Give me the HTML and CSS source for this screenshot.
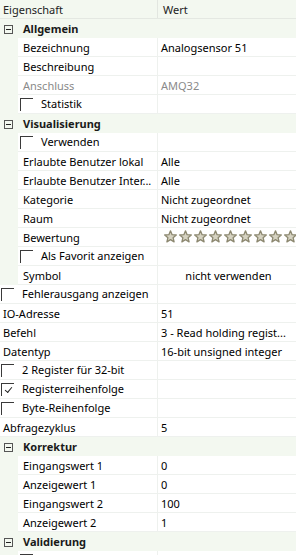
FILE: index.html
```html
<!DOCTYPE html>
<html>
<head>
<meta charset="utf-8">
<link rel="stylesheet" href="styles.css">
</head>
<body>
<div class="grid">
  <div class="hdr"><div class="hk">Eigenschaft</div><div class="hv">Wert</div></div>

  <div class="grp"><span class="tog"></span><span class="gt">Allgemein</span></div>
  <div class="row"><div class="ind"></div><div class="k">Bezeichnung</div><div class="v">Analogsensor 51</div></div>
  <div class="row"><div class="ind"></div><div class="k">Beschreibung</div><div class="v"></div></div>
  <div class="row dis"><div class="ind"></div><div class="k">Anschluss</div><div class="v">AMQ32</div></div>
  <div class="row"><div class="ind"></div><div class="k cb"><span class="box"></span>Statistik</div><div class="v"></div></div>

  <div class="grp"><span class="tog"></span><span class="gt">Visualisierung</span></div>
  <div class="row"><div class="ind"></div><div class="k cb"><span class="box"></span>Verwenden</div><div class="v"></div></div>
  <div class="row"><div class="ind"></div><div class="k">Erlaubte Benutzer lokal</div><div class="v">Alle</div></div>
  <div class="row"><div class="ind"></div><div class="k">Erlaubte Benutzer Inter...</div><div class="v">Alle</div></div>
  <div class="row"><div class="ind"></div><div class="k">Kategorie</div><div class="v">Nicht zugeordnet</div></div>
  <div class="row"><div class="ind"></div><div class="k">Raum</div><div class="v">Nicht zugeordnet</div></div>
  <div class="row"><div class="ind"></div><div class="k">Bewertung</div><div class="v stars">
    <svg width="140" height="14" viewBox="0 0 140 14">
      <defs>
        <path id="st" d="M6.5 0.8 L8.1 4.7 L12.3 5 L9.1 7.7 L10.1 11.9 L6.5 9.6 L2.9 11.9 L3.9 7.7 L0.7 5 L4.9 4.7 Z"/>
      </defs>
      <g fill="#d6d3c2" stroke="#8c8870" stroke-width="1.3" stroke-linejoin="round">
        <use href="#st" x="0"/><use href="#st" x="15"/><use href="#st" x="30"/>
        <use href="#st" x="45"/><use href="#st" x="60"/><use href="#st" x="75"/>
        <use href="#st" x="90"/><use href="#st" x="105"/><use href="#st" x="120"/>
      </g>
    </svg>
  </div></div>
  <div class="row"><div class="ind"></div><div class="k cb"><span class="box"></span>Als Favorit anzeigen</div><div class="v"></div></div>
  <div class="row"><div class="ind"></div><div class="k">Symbol</div><div class="v center">nicht verwenden</div></div>

  <div class="row top"><div class="k cb"><span class="box"></span>Fehlerausgang anzeigen</div><div class="v"></div></div>
  <div class="row top"><div class="k">IO-Adresse</div><div class="v">51</div></div>
  <div class="row top"><div class="k">Befehl</div><div class="v">3 - Read holding regist...</div></div>
  <div class="row top"><div class="k">Datentyp</div><div class="v">16-bit unsigned integer</div></div>
  <div class="row top"><div class="k cb"><span class="box"></span>2 Register für 32-bit</div><div class="v"></div></div>
  <div class="row top"><div class="k cb"><span class="box on"></span>Registerreihenfolge</div><div class="v"></div></div>
  <div class="row top"><div class="k cb"><span class="box"></span>Byte-Reihenfolge</div><div class="v"></div></div>
  <div class="row top"><div class="k">Abfragezyklus</div><div class="v">5</div></div>

  <div class="grp"><span class="tog"></span><span class="gt">Korrektur</span></div>
  <div class="row"><div class="ind"></div><div class="k">Eingangswert 1</div><div class="v">0</div></div>
  <div class="row"><div class="ind"></div><div class="k">Anzeigewert 1</div><div class="v">0</div></div>
  <div class="row"><div class="ind"></div><div class="k">Eingangswert 2</div><div class="v">100</div></div>
  <div class="row"><div class="ind"></div><div class="k">Anzeigewert 2</div><div class="v">1</div></div>

  <div class="grp"><span class="tog"></span><span class="gt">Validierung</span></div>
  <div class="row"><div class="ind"></div><div class="k cb"><span class="box"></span></div><div class="v"></div></div>
</div>
</body>
</html>
```
FILE: styles.css
```css
html, body {
  margin: 0;
  padding: 0;
  background: #ffffff;
  overflow: hidden;
}
.grid {
  width: 296px;
  font-family: "Noto Sans", "Open Sans", sans-serif;
  font-size: 11px;
  color: #000;
  line-height: 18px;
}
.hdr {
  display: flex;
  height: 19px;
  box-sizing: border-box;
  padding-top: 1px;
  background: #f3f8f0;
  border-bottom: 1px solid #e4e8e2;
  color: #222;
}
.hk {
  width: 154px;
  padding-left: 3px;
  border-right: 1px solid #e2e6e0;
  margin-top: -1px;
  padding-top: 1px;
}
.hv {
  padding-left: 5px;
}
.grp {
  display: flex;
  align-items: center;
  height: 19px;
  box-sizing: border-box;
  padding-top: 1px;
  background: #f3f8f0;
}
.tog {
  position: relative;
  box-sizing: border-box;
  width: 9px;
  height: 9px;
  border: 1px solid #555;
  margin: 0 10px 0 4px;
  flex: none;
}
.tog::after {
  content: "";
  position: absolute;
  left: 1px;
  top: 3px;
  width: 5px;
  height: 1px;
  background: #222;
}
.gt {
  font-weight: bold;
  color: #1a1a1a;
}
.row {
  display: flex;
  height: 19px;
}
.ind {
  width: 18px;
  flex: none;
  background: #f3f8f0;
}
.k {
  width: 140px;
  flex: none;
  box-sizing: border-box;
  padding-left: 5px;
  padding-top: 1px;
  border-right: 1px solid #eef1ee;
  border-bottom: 1px solid #eef1ee;
  white-space: nowrap;
  overflow: hidden;
  display: flex;
  align-items: center;
}
.top .k {
  width: 158px;
  padding-left: 3px;
}
.v {
  flex: 1;
  box-sizing: border-box;
  padding-left: 3px;
  padding-top: 1px;
  border-bottom: 1px solid #eef1ee;
  white-space: nowrap;
  overflow: hidden;
  display: flex;
  align-items: center;
}
.center {
  justify-content: center;
}
.dis .k, .dis .v {
  color: #8a8a8a;
}
.k.cb {
  padding-left: 2px;
  padding-top: 0;
}
.top .k.cb {
  padding-left: 1px;
}
.box {
  position: relative;
  box-sizing: border-box;
  width: 13px;
  height: 13px;
  border-left: 1px solid #3a3a3a;
  border-top: 1px solid #3a3a3a;
  margin-right: 8px;
  flex: none;
}
.box.on::after {
  content: "";
  position: absolute;
  left: 3px;
  top: 3px;
  width: 6px;
  height: 3px;
  border-left: 1px solid #222;
  border-bottom: 1px solid #222;
  transform: rotate(-50deg);
}
.v.stars {
  padding-left: 6px;
  padding-top: 0;
}
.stars svg {
  display: block;
  flex: none;
}
```
